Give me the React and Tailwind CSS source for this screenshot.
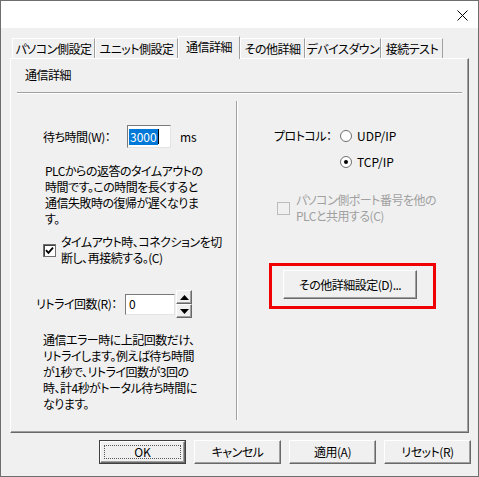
const FONT = "font-['Noto_Sans_CJK_JP',sans-serif] [font-feature-settings:'palt']";

const tabs = [
  { label: "パソコン側設定", w: "w-[83px]" },
  { label: "ユニット側設定", w: "w-[83px]" },
  { label: "通信詳細", w: "w-[62px]", active: true },
  { label: "その他詳細", w: "w-[65px]" },
  { label: "デバイスダウン", w: "w-[76px]" },
  { label: "接続テスト", w: "w-[62px]" }
];

function Check({ checked, disabled }) {
  return (
    <span
      className={`flex h-[13px] w-[13px] shrink-0 items-center justify-center border ${
        disabled ? "border-[#bcbcbc] bg-[#f0f0f0]" : "border-[#707070] bg-white shadow-[inset_1px_1px_0_#404040]"
      }`}
    >
      {checked ? (
        <svg width="9" height="9" viewBox="0 0 9 9">
          <path d="M1 4.2 L3.4 6.8 L8 1.6" fill="none" stroke="#000" strokeWidth="1.8" />
        </svg>
      ) : null}
    </span>
  );
}

function Radio({ checked }) {
  return (
    <span className="flex h-[12px] w-[12px] shrink-0 items-center justify-center rounded-full border border-[#707070] bg-white">
      {checked ? <span className="h-[4px] w-[4px] rounded-full bg-black" /> : null}
    </span>
  );
}

function Button({ children, className = "", isDefault = false }) {
  if (isDefault) {
    return (
      <div className={`border border-[#404040] ${className}`}>
        <span className="relative flex h-full w-full items-center justify-center border-t border-l border-white border-r border-b border-r-[#696969] border-b-[#696969] bg-[#f0f0f0] shadow-[inset_-1px_-1px_0_#a0a0a0]">
          <span className="absolute inset-[3px] border border-dotted border-[#555555]" />
          {children}
        </span>
      </div>
    );
  }
  return (
    <div className={className}>
      <span className="flex h-full w-full items-center justify-center border-t border-l border-white border-r border-b border-r-[#696969] border-b-[#696969] bg-[#f0f0f0] shadow-[inset_-1px_-1px_0_#a0a0a0]">
        {children}
      </span>
    </div>
  );
}

function SpinButton({ up }) {
  return (
    <span className="flex h-[14px] w-[16px] items-center justify-center border-t border-l border-white border-r border-b border-r-[#696969] border-b-[#696969] bg-[#f0f0f0] shadow-[inset_-1px_-1px_0_#a0a0a0]">
      <svg width="9" height="5" viewBox="0 0 9 5">
        {up ? <path d="M0 5 L4.5 0 L9 5 Z" fill="#000" /> : <path d="M0 0 L4.5 5 L9 0 Z" fill="#000" />}
      </svg>
    </span>
  );
}

export default function App() {
  return (
    <div
      className={`flex h-[477px] w-[479px] flex-col border border-[#6e6e6e] bg-[#f0f0f0] text-[12px] tracking-[-0.5px] whitespace-nowrap text-black ${FONT}`}
    >
      <div className="flex h-[27px] shrink-0 items-start justify-end bg-white pt-[9px] pr-[10px]">
        <svg width="11" height="11" viewBox="0 0 11 11">
          <path d="M0.5 0.5 L10.5 10.5 M10.5 0.5 L0.5 10.5" stroke="#000" strokeWidth="1" />
        </svg>
      </div>

      <div className="flex h-[30px] shrink-0 items-end pl-[11px] pt-[8px]">
        {tabs.map((tab) =>
          tab.active ? (
            <div
              key={tab.label}
              className={`relative z-10 -mb-px flex h-[23px] ${tab.w} items-start justify-center border-t border-l border-white border-r border-r-[#a0a0a0] bg-[#f0f0f0] pt-[2px] leading-[16px]`}
            >
              {tab.label}
            </div>
          ) : (
            <div
              key={tab.label}
              className={`flex h-[20px] ${tab.w} items-center justify-center border-t border-l border-white border-r border-r-[#a0a0a0] leading-[16px]`}
            >
              {tab.label}
            </div>
          )
        )}
      </div>

      <div className="ml-[9px] h-[375px] w-[459px] border-t border-l border-white border-r border-b border-r-[#696969] border-b-[#696969] shadow-[inset_-1px_-1px_0_#a0a0a0]">
        <div className="pl-[14px] pt-[8px] leading-[16px]">通信詳細</div>
        <div className="mt-[9px] ml-[6px] h-[2px] w-[445px] border-t border-[#a0a0a0] border-b border-b-white" />

        <div className="flex">
          <div className="ml-[6px] w-[219px]">
            <div className="mt-[31px] flex items-center pl-[26px]">
              <span className="w-[84px] leading-[16px]">待ち時間(W)：</span>
              <span className="flex h-[23px] w-[44px] items-center border border-t-[#7a7a7a] border-l-[#7a7a7a] border-r-[#e3e3e3] border-b-[#e3e3e3] bg-white pl-[1px]">
                <span className="bg-[#0078d7] px-[1px] leading-[16px] tracking-normal text-white">3000</span>
                <span className="h-[15px] w-px bg-black" />
              </span>
              <span className="ml-[9px] leading-[16px] tracking-normal">ms</span>
            </div>

            <div className="mt-[15px] pl-[28px] leading-[16px]">
              <div>PLCからの返答のタイムアウトの</div>
              <div>時間です。この時間を長くすると</div>
              <div>通信失敗時の復帰が遅くなりま</div>
              <div>す。</div>
            </div>

            <div className="mt-[7px] flex items-center pl-[26px]">
              <Check checked />
              <div className="ml-[5px] leading-[16px]">
                <div>タイムアウト時、コネクションを切</div>
                <div>断し、再接続する。(C)</div>
              </div>
            </div>

            <div className="mt-[24px] flex items-center pl-[19px]">
              <span className="w-[89px] leading-[16px]">リトライ回数(R)：</span>
              <span className="flex h-[21px] w-[50px] items-center border border-t-[#7a7a7a] border-l-[#7a7a7a] border-r-[#e3e3e3] border-b-[#e3e3e3] bg-white pl-[3px] leading-[16px]">
                0
              </span>
              <span className="ml-px flex flex-col">
                <SpinButton up />
                <SpinButton />
              </span>
            </div>

            <div className="mt-[14px] pl-[26px] leading-[16px]">
              <div>通信エラー時に上記回数だけ、</div>
              <div>リトライします。例えば待ち時間</div>
              <div>が1秒で、リトライ回数が3回の</div>
              <div>時、計4秒がトータル待ち時間に</div>
              <div>なります。</div>
            </div>
          </div>

          <div className="mt-[7px] h-[319px] w-[2px] border-l border-[#a0a0a0] border-r border-r-white" />

          <div className="flex-1">
            <div className="mt-[34px] flex items-center pl-[36px] leading-[16px]">
              <span className="w-[66px]">プロトコル：</span>
              <Radio />
              <span className="ml-[5px] tracking-normal">UDP/IP</span>
            </div>
            <div className="mt-[10px] flex items-center pl-[102px] leading-[16px]">
              <Radio checked />
              <span className="ml-[5px] tracking-normal">TCP/IP</span>
            </div>

            <div className="mt-[22px] flex items-center pl-[39px]">
              <Check disabled />
              <div className="ml-[6px] leading-[16px] text-[#a0a0a0]">
                <div>パソコン側ポート番号を他の</div>
                <div>PLCと共用する(C)</div>
              </div>
            </div>

            <div className="mt-[39px] ml-[31px] h-[46px] w-[167px] border-[3px] border-[#f00000] pl-[11px] pt-[4px]">
              <Button className="h-[29px] w-[134px]">
                <span className="leading-[16px]">その他詳細設定(D)...</span>
              </Button>
            </div>
          </div>
        </div>
      </div>

      <div className="mt-[7px] flex justify-end gap-[8px] pr-[7px]">
        <Button isDefault className="h-[24px] w-[87px]">
          <span className="leading-[16px] tracking-normal">OK</span>
        </Button>
        <Button className="h-[24px] w-[87px]">
          <span className="leading-[16px]">キャンセル</span>
        </Button>
        <Button className="h-[24px] w-[87px]">
          <span className="leading-[16px]">適用(A)</span>
        </Button>
        <Button className="h-[24px] w-[87px]">
          <span className="leading-[16px]">リセット(R)</span>
        </Button>
      </div>
    </div>
  );
}
